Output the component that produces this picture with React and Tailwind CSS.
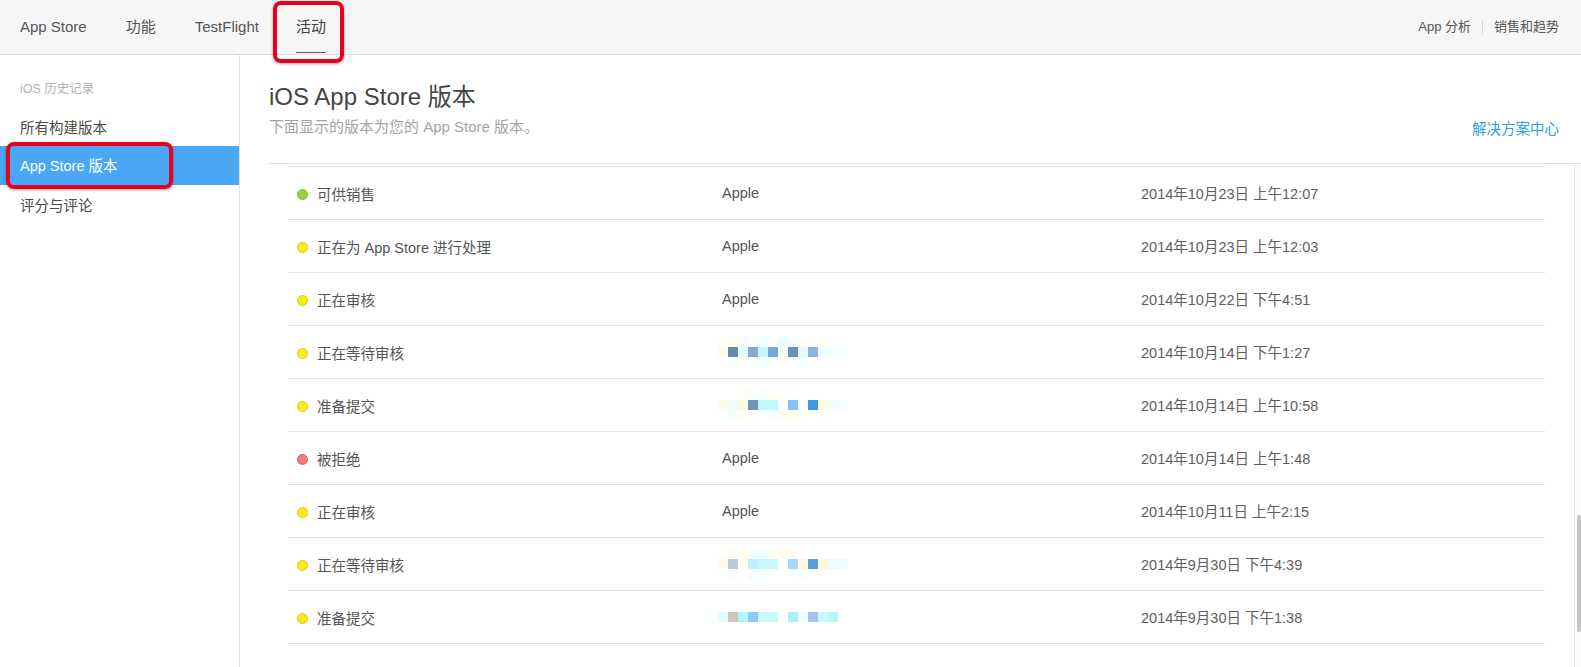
import React from 'react';

const rows = [
  { status: '可供销售', color: 'green', who: 'Apple', date: '2014年10月23日 上午12:07' },
  { status: '正在为 App Store 进行处理', color: 'yellow', who: 'Apple', date: '2014年10月23日 上午12:03' },
  { status: '正在审核', color: 'yellow', who: 'Apple', date: '2014年10月22日 下午4:51' },
  { status: '正在等待审核', color: 'yellow', mosaic: 0, date: '2014年10月14日 下午1:27' },
  { status: '准备提交', color: 'yellow', mosaic: 1, date: '2014年10月14日 上午10:58' },
  { status: '被拒绝', color: 'red', who: 'Apple', date: '2014年10月14日 上午1:48' },
  { status: '正在审核', color: 'yellow', who: 'Apple', date: '2014年10月11日 上午2:15' },
  { status: '正在等待审核', color: 'yellow', mosaic: 2, date: '2014年9月30日 下午4:39' },
  { status: '准备提交', color: 'yellow', mosaic: 3, date: '2014年9月30日 下午1:38' },
];

// blurred submitter names: three rows of 10px cells
const mosaics = [
  [
    ['#fffff6', '#fffef2', '#f6fdff', '#f8ffff', '#f2ffff', '#ffffff', '#eafdff', '#f8fff8', '#fffef4', '#ffffff', '#fffef6', '#ffffff', '#ffffff'],
    ['#fffcee', '#6a8aa3', '#e6fbff', '#86a9c9', '#c9f7ff', '#79a7d3', '#f6ffff', '#6b91bf', '#e6fcff', '#8bb5dd', '#f2ffff', '#f4ffff', '#f8ffff'],
    ['#ffffff', '#f6feff', '#ffffff', '#f8fdff', '#f0ffff', '#f9ffff', '#ffffff', '#fbffff', '#f4ffff', '#ffffff', '#ffffff', '#ffffff', '#ffffff'],
  ],
  [
    ['#ffffff', '#ffffff', '#fffef6', '#f6ffff', '#f4feff', '#fffef2', '#fffff4', '#ffffff', '#ffffff', '#ffffff', '#ffffff', '#ffffff', '#ffffff'],
    ['#fffbe8', '#eefeff', '#fff7df', '#6e95b9', '#c1f8ff', '#c1f8ff', '#fdffff', '#7fc3fc', '#fafeff', '#3d98e4', '#fffbe0', '#effeff', '#f2ffff'],
    ['#ffffff', '#f2ffff', '#fffdf4', '#fffef8', '#ffffff', '#f6fffe', '#fffbf0', '#fffff4', '#fffff6', '#ffffff', '#fffff8', '#ffffff', '#ffffff'],
  ],
  [
    ['#ffffff', '#fffef4', '#fffff0', '#f4ffff', '#f2fdff', '#fffef2', '#fffbee', '#fffdf6', '#ffffff', '#ffffff', '#ffffff', '#ffffff', '#ffffff'],
    ['#fffbea', '#b8cce0', '#fffff0', '#bdeeff', '#c4f8ff', '#c4f8ff', '#ffffff', '#a4d8fc', '#fff6e0', '#5a9ed8', '#fff6d8', '#e8fdff', '#eefeff'],
    ['#ffffff', '#f0feff', '#ffffff', '#f2ffff', '#f6ffff', '#ffffff', '#ffffff', '#ffffff', '#f6ffff', '#ffffff', '#ffffff', '#ffffff', '#ffffff'],
  ],
  [
    ['#ffffff', '#ffffff', '#ffffff', '#ffffff', '#ffffff', '#ffffff', '#ffffff', '#ffffff', '#ffffff', '#ffffff', '#ffffff', '#ffffff', '#ffffff'],
    ['#e0feff', '#cfc8b8', '#b0f6ff', '#8cc8f8', '#c8f8ff', '#c8f8ff', '#ffffff', '#a8f0fa', '#e8feff', '#a4c4ec', '#c8f8ff', '#b4f8fc', '#ffffff'],
    ['#ffffff', '#ffffff', '#ffffff', '#ffffff', '#ffffff', '#ffffff', '#ffffff', '#ffffff', '#ffffff', '#ffffff', '#ffffff', '#ffffff', '#ffffff'],
  ],
];

const dotClass = {
  green: 'bg-[#8fd43c] border-[#7cbf2c]',
  yellow: 'bg-[#f8ea1c] border-[#dccd0a]',
  red: 'bg-[#f27a78] border-[#d9605e]',
};

function Mosaic({ cells }) {
  return (
    <div className="flex flex-col">
      {cells.map((line, i) => (
        <div key={i} className="flex">
          {line.map((c, j) => (
            <div key={j} className="h-[10px] w-[10px]" style={{ backgroundColor: c }} />
          ))}
        </div>
      ))}
    </div>
  );
}

function NavItem({ label, active, className = '' }) {
  return (
    <div className={`relative flex h-full items-center ${className}`}>
      <span className={active ? 'text-[#444]' : ''}>{label}</span>
      {active && (
        <>
          <div className="absolute bottom-[1px] left-0 right-0 h-[1.5px] bg-[#5a5a5a]" />
          <div className="absolute left-[-23px] top-[1px] h-[62px] w-[71px] rounded-[8px] border-[4px] border-[#e8001c] shadow-[0_1px_3px_rgba(0,0,0,0.35)]" />
        </>
      )}
    </div>
  );
}

export default function App() {
  return (
    <div className="flex h-[667px] w-[1581px] flex-col overflow-hidden bg-white font-['Liberation_Sans','Noto_Sans_CJK_SC',sans-serif] text-[#555]">
      <header className="flex h-[55px] shrink-0 items-center justify-between border-b border-[#dedede] bg-[#f6f6f6] pl-5 pr-[22px]">
        <nav className="flex h-full text-[15px] text-[#555]">
          <NavItem label="App Store" />
          <NavItem label="功能" className="ml-[39px]" />
          <NavItem label="TestFlight" className="ml-[39px]" />
          <NavItem label="活动" active className="ml-[37px]" />
        </nav>
        <div className="flex items-center text-[13px] text-[#555]">
          <span>App 分析</span>
          <span className="mx-[11px] h-[14px] w-px bg-[#d8d8d8]" />
          <span>销售和趋势</span>
        </div>
      </header>

      <div className="flex min-h-0 flex-1">
        <aside className="w-[240px] shrink-0 border-r border-[#e2e2e2] pt-[25px]">
          <div className="px-5 text-[12.5px] leading-[18px] text-[#b2b2b2]">iOS 历史记录</div>
          <div className="mt-[9px] text-[14.5px]">
            <div className="flex h-[39px] items-center px-5 pt-[4px] text-[#4a4a4a]">所有构建版本</div>
            <div className="relative flex h-[39px] items-center bg-[#4aa7f5] px-5 pt-[3px] text-white">
              App Store 版本
              <div className="absolute left-[6px] top-[-4px] h-[47px] w-[167px] rounded-[8px] border-[4px] border-[#e8001c] shadow-[0_1px_3px_rgba(0,0,0,0.35)]" />
            </div>
            <div className="flex h-[39px] items-center px-5 pt-[4px] text-[#4a4a4a]">评分与评论</div>
          </div>
        </aside>

        <main className="flex min-w-0 flex-1 flex-col pl-[29px]">
          <div className="flex h-[108px] shrink-0 items-end justify-between pb-[26px] pr-[22px]">
            <div>
              <h1 className="text-[24px] leading-[30px] text-[#444]">iOS App Store 版本</h1>
              <p className="mt-[5px] text-[15px] leading-[20px] text-[#a3a3a3]">下面显示的版本为您的 App Store 版本。</p>
            </div>
            <a href="#" className="relative top-[2px] text-[14.5px] leading-[20px] text-[#2e9be2]">解决方案中心</a>
          </div>

          <div className="flex min-h-0 flex-1 border-t border-[#e0e0e0]">
            <div className="flex-1 pl-[19px] pr-[29px] pt-[2px]">
              <div className="border-t border-[#e4e4e4]">
                {rows.map((r, i) => (
                  <div key={i} className="grid h-[53px] grid-cols-[434px_419px_1fr] items-center border-b border-[#e4e4e4] pt-[2px] text-[14.5px]">
                    <div className="flex items-center pl-[9px]">
                      <span className={`h-[11px] w-[11px] rounded-full border ${dotClass[r.color]}`} />
                      <span className="ml-[9px] pt-[3px] text-[#555]">{r.status}</span>
                    </div>
                    <div className="text-[#555]">
                      {r.mosaic !== undefined ? (
                        <div className="-ml-[4px] mt-[-2px]">
                          <Mosaic cells={mosaics[r.mosaic]} />
                        </div>
                      ) : (
                        r.who
                      )}
                    </div>
                    <div className="pt-[1px] text-[#5e5e5e]">{r.date}</div>
                  </div>
                ))}
              </div>
            </div>
            <div className="w-[7px] shrink-0 border-l border-[#e6e6e6] bg-[#fbfbfb]">
              <div className="ml-[2px] mt-[351px] h-[117px] w-[4px] rounded-full bg-[#c6c6c6]" />
            </div>
          </div>
        </main>
      </div>
    </div>
  );
}
